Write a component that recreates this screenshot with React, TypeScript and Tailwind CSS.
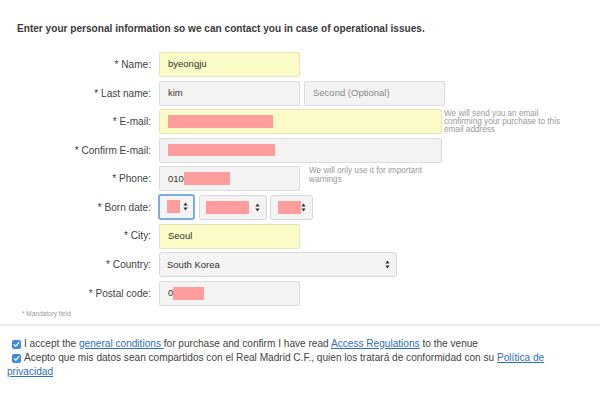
import React from "react";

const redact = "bg-[#ff9c9c]";

function Arrows() {
    return (
        <svg width="5" height="9" viewBox="0 0 5 9" className="shrink-0">
            <path d="M2.5 0.5 L4.6 3.6 L0.4 3.6 Z" fill="#333" />
            <path d="M2.5 8.5 L4.6 5.4 L0.4 5.4 Z" fill="#333" />
        </svg>
    );
}

function Check() {
    return (
        <span className="inline-flex w-[9px] h-[9px] rounded-[2px] bg-[#3a8be6] items-center justify-center align-[-1px] mr-[3px]">
            <svg width="7" height="7" viewBox="0 0 7 7">
                <path d="M1.2 3.6 L2.8 5.2 L5.9 1.6" stroke="#fff" strokeWidth="1.3" fill="none" strokeLinecap="round" strokeLinejoin="round" />
            </svg>
        </span>
    );
}

const yellowBox = "h-[25px] rounded-[2px] border border-[#e6e6b8] bg-[#fafbc6] flex items-center px-[8px] text-[9.5px] text-[#333]";
const grayBox = "h-[25px] rounded-[2px] border border-[#dcdcdc] bg-[#f3f3f3] flex items-center px-[8px] text-[9.5px] text-[#333]";
const selectBox = "h-[25px] rounded-[3px] border border-[#d8d8d8] bg-[#f4f4f4] flex items-center justify-between pl-[7px] pr-[6px] text-[9.5px] text-[#333]";

function Row({ label, children }: { label: string; children: React.ReactNode }) {
    return (
        <div className="flex items-start h-[25px]">
            <div className="w-[151px] h-[25px] flex items-center justify-end text-[10.1px] text-[#444]">{label}</div>
            <div className="ml-[8px] flex items-start">{children}</div>
        </div>
    );
}

export default function App() {
    return (
        <div className="w-[600px] h-[397px] bg-white overflow-hidden font-['Liberation_Sans',Arial,sans-serif] text-[#333]">
            <p className="pl-[17px] pt-[23px] text-[10.1px] font-bold leading-[12px] text-[#3a3a3a]">
                Enter your personal information so we can contact you in case of operational issues.
            </p>

            <div className="mt-[17px] flex flex-col gap-[3.6px]">
                <Row label="* Name:">
                    <div className={`${yellowBox} w-[141px]`}>byeongju</div>
                </Row>
                <Row label="* Last name:">
                    <div className={`${grayBox} w-[141px]`}>kim</div>
                    <div className={`${grayBox} w-[141px] ml-[4px] text-[#888]`}>Second (Optional)</div>
                </Row>
                <Row label="* E-mail:">
                    <div className={`${yellowBox} w-[283px] px-[5px]`}>
                        <span className={`${redact} w-[105px] h-[13px]`} />
                    </div>
                    <div className="ml-[2px] pt-[1px] text-[8.2px] leading-[7.7px] text-[#9a9a9a] w-[150px]">
                        We will send you an email
                        <br />
                        confirming your purchase to this
                        <br />
                        email address
                    </div>
                </Row>
                <Row label="* Confirm E-mail:">
                    <div className={`${grayBox} w-[283px] px-[6px]`}>
                        <span className={`${redact} w-[107px] h-[12px]`} />
                    </div>
                </Row>
                <Row label="* Phone:">
                    <div className={`${grayBox} w-[141px]`}>
                        <span>010</span>
                        <span className={`${redact} w-[46px] h-[13px]`} />
                    </div>
                    <div className="ml-[9px] pt-[1px] text-[8.2px] leading-[8.2px] text-[#9a9a9a] w-[150px]">
                        We will only use it for important
                        <br />
                        warnings
                    </div>
                </Row>
                <Row label="* Born date:">
                    <div className="w-[37px] h-[26px] -ml-[1px] -mt-[1px] rounded-[3px] border-2 border-[#7eaae6] bg-[#f4f4f4] flex items-center justify-between pl-[7px] pr-[5px]">
                        <span className={`${redact} w-[13px] h-[13px]`} />
                        <Arrows />
                    </div>
                    <div className={`${selectBox} w-[68px] ml-[4px]`}>
                        <span className={`${redact} w-[43px] h-[13px] ml-[-1px]`} />
                        <Arrows />
                    </div>
                    <div className={`${selectBox} w-[43px] ml-[3px] pl-[4px]`}>
                        <span className={`${redact} w-[28px] h-[13px]`} />
                        <Arrows />
                    </div>
                </Row>
                <Row label="* City:">
                    <div className={`${yellowBox} w-[141px]`}>Seoul</div>
                </Row>
                <Row label="* Country:">
                    <div className={`${selectBox} w-[238px]`}>
                        <span>South Korea</span>
                        <Arrows />
                    </div>
                </Row>
                <Row label="* Postal code:">
                    <div className={`${grayBox} w-[141px]`}>
                        <span>0</span>
                        <span className={`${redact} w-[31px] h-[13px]`} />
                    </div>
                </Row>
            </div>

            <p className="pl-[22px] mt-[3px] text-[6.5px] leading-[10px] text-[#999]">* Mandatory field</p>

            <div className="mt-[5px] h-[2px] bg-[#e8e8e8]" />

            <div className="pl-[7px] pr-[45px] pt-[11px] text-[10.1px] leading-[14px] text-[#444]">
                <p className="pl-[5px]">
                    <Check />I accept the{" "}
                    <a className="text-[#2a6fc0] underline">general conditions </a> for purchase and confirm I have read{" "}
                    <a className="text-[#2a6fc0] underline">Access Regulations</a> to the venue
                </p>
                <p>
                    <span className="pl-[5px]" />
                    <Check />Acepto que mis datos sean compartidos con el Real Madrid C.F., quien los tratará de conformidad con su{" "}
                    <a className="text-[#2a6fc0] underline">Política de</a>{" "}
                    <a className="text-[#2a6fc0] underline">privacidad</a>
                </p>
            </div>
        </div>
    );
}
